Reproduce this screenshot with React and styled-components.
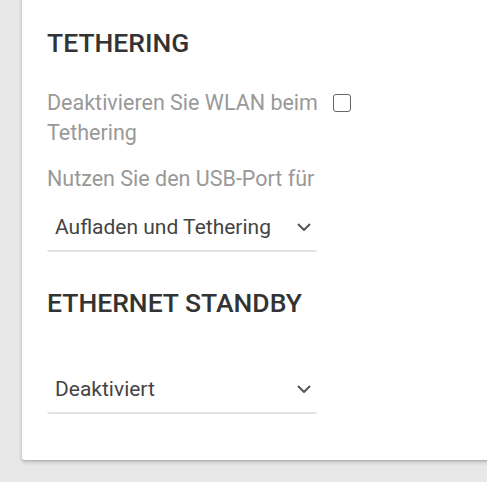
import React from "react";
import styled, { createGlobalStyle } from "styled-components";

const GlobalStyle = createGlobalStyle`
  html, body {
    margin: 0;
    padding: 0;
    background: #e7e8e7;
    font-family: Roboto, "Noto Sans", Arial, sans-serif;
  }
`;

const Page = styled.div`
  width: 487px;
  height: 482px;
  overflow: hidden;
  padding-left: 22px;
  box-sizing: border-box;
`;

const Card = styled.div`
  margin-top: -10px;
  margin-right: -20px;
  background: #fff;
  border-radius: 3px;
  box-shadow: 0 2px 4px rgba(0, 0, 0, 0.2), 0 1px 2px rgba(0, 0, 0, 0.1);
  padding: 37px 25px 46px;
`;

const Section = styled.section`
  display: flex;
  flex-direction: column;
  margin-top: ${(p) => p.$top || 0}px;
`;

const Title = styled.h2`
  margin: 0;
  font-size: 26.5px;
  line-height: 32px;
  font-weight: 500;
  color: #333;
`;

const Row = styled.div`
  display: flex;
  align-items: flex-start;
  gap: 6px;
  margin-top: ${(p) => p.$top || 0}px;
`;

const Label = styled.div`
  width: ${(p) => p.$width || 270}px;
  font-size: 21.5px;
  line-height: 30px;
  color: #999;
  margin-top: ${(p) => p.$top || 0}px;
`;

const Checkbox = styled.span`
  width: 18px;
  height: 18px;
  margin-top: 6px;
  box-sizing: border-box;
  border: 1.5px solid #666;
  border-radius: 3px;
  background: #fff;
`;

const Select = styled.div`
  width: 270px;
  height: 48px;
  box-sizing: border-box;
  display: flex;
  align-items: center;
  justify-content: space-between;
  padding: 0 6px 0 8px;
  border-bottom: 2px solid #e3e3e3;
  border-radius: 0 0 2px 2px;
  margin-top: ${(p) => p.$top || 0}px;
  font-size: 21px;
  color: #444;
`;

const Chevron = () => (
  <svg width="14" height="8" viewBox="0 0 14 8" fill="none">
    <polyline points="1,1 7,7 13,1" stroke="#555" strokeWidth="2" />
  </svg>
);

export default function App() {
  return (
    <>
      <GlobalStyle />
      <Page>
        <Card>
          <Section>
            <Title>TETHERING</Title>
            <Row $top={29}>
              <Label $width={280}>Deaktivieren Sie WLAN beim Tethering</Label>
              <Checkbox />
            </Row>
            <Label $top={16}>Nutzen Sie den USB-Port für</Label>
            <Select $top={10}>
              <span>Aufladen und Tethering</span>
              <Chevron />
            </Select>
          </Section>
          <Section $top={35}>
            <Title>ETHERNET STANDBY</Title>
            <Select $top={47}>
              <span>Deaktiviert</span>
              <Chevron />
            </Select>
          </Section>
        </Card>
      </Page>
    </>
  );
}
